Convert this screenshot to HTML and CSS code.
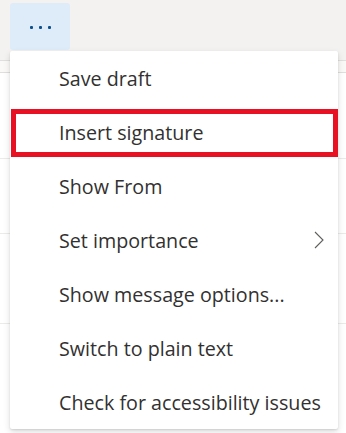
FILE: index.html
```
<!DOCTYPE html>
<html lang="en">
<head>
  <meta charset="UTF-8">
  <title>More options</title>
  <link rel="stylesheet" href="styles.css">
</head>
<body>

<div class="page">

  <!-- Toolbar with the "more" button -->
  <div class="toolbar">
    <button class="more-button" aria-label="More options">
      <span class="dot"></span><span class="dot"></span><span class="dot"></span>
    </button>
  </div>
  <div class="subbar"></div>

  <!-- Compose area behind the menu -->
  <div class="compose">
    <div class="row row-1"></div>
    <div class="row row-2"></div>
    <div class="row row-3"></div>
  </div>

  <!-- Dropdown menu -->
  <ul class="menu">
    <li class="menu-item">Save draft</li>
    <li class="menu-item highlight">Insert signature</li>
    <li class="menu-item">Show From</li>
    <li class="menu-item has-sub">
      Set importance
      <svg class="chevron" width="10" height="18" viewBox="0 0 10 18">
        <path d="M1 1 L9 9 L1 17" fill="none" stroke="#605e5c" stroke-width="1.1"/>
      </svg>
    </li>
    <li class="menu-item">Show message options...</li>
    <li class="menu-item">Switch to plain text</li>
    <li class="menu-item">Check for accessibility issues</li>
  </ul>

</div>

</body>
</html>
```

FILE: styles.css
```
body {
  margin: 0;
  font-family: "Open Sans", "Noto Sans", sans-serif;
  background-color: #ffffff;
}

.page {
  position: relative;
  width: 346px;
  height: 433px;
  overflow: hidden;
}

.toolbar {
  height: 61px;
  background-color: #f3f2f1;
  border-bottom: 1px solid #e1dfdd;
  box-sizing: border-box;
  padding: 3px 10px 0 10px;
}

.more-button {
  width: 60px;
  height: 47px;
  border: none;
  border-radius: 3px;
  background-color: #deecf9;
  display: flex;
  justify-content: center;
  align-items: center;
  gap: 6px;
  padding: 0;
  padding-top: 1px;
}

.dot {
  width: 3px;
  height: 3px;
  background-color: #0b4f8c;
  border-radius: 1px;
}

.subbar {
  height: 11px;
  background-color: #faf9f8;
  border-bottom: 1px solid #e1dfdd;
}

.compose .row {
  border-bottom: 1px solid #edebe9;
}

.row-1 { height: 85px; }
.row-2 { height: 74px; }
.row-3 { height: 89px; }

.menu {
  position: absolute;
  top: 51px;
  left: 10px;
  width: 328px;
  margin: 0;
  padding: 0;
  list-style: none;
  background-color: #ffffff;
  border-radius: 2px;
  box-shadow: 0 3px 7px rgba(0, 0, 0, 0.13), 0 1px 2px rgba(0, 0, 0, 0.11);
}

.menu-item {
  position: relative;
  height: 54px;
  display: flex;
  align-items: center;
  padding-left: 49px;
  padding-right: 14px;
  font-size: 19.7px;
  color: #323130;
}

.has-sub {
  justify-content: space-between;
}

.chevron {
  display: block;
}

.highlight::after {
  content: "";
  position: absolute;
  top: 4px;
  bottom: 2px;
  left: 1px;
  right: 0;
  border: 5px solid #e81123;
}
```
